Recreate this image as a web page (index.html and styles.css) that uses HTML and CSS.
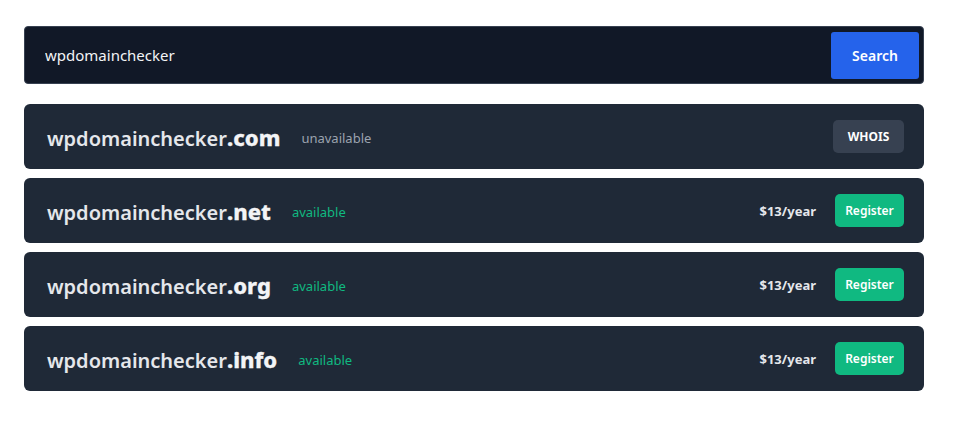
FILE: index.html
```html
<!DOCTYPE html>
<html lang="en">
<head>
<meta charset="utf-8">
<title>Domain Checker</title>
<link rel="stylesheet" href="styles.css">
</head>
<body>
<main class="checker">
  <form class="search">
    <input class="search-input" type="text" value="wpdomainchecker">
    <button class="search-btn" type="button">Search</button>
  </form>
  <ul class="results">
    <li class="result">
      <div class="domain">
        <span class="name">wpdomainchecker<b class="tld">.com</b></span>
        <span class="status taken">unavailable</span>
      </div>
      <div class="actions">
        <button class="btn whois" type="button">WHOIS</button>
      </div>
    </li>
    <li class="result">
      <div class="domain">
        <span class="name">wpdomainchecker<b class="tld">.net</b></span>
        <span class="status free">available</span>
      </div>
      <div class="actions">
        <span class="price">$13/year</span>
        <button class="btn register" type="button">Register</button>
      </div>
    </li>
    <li class="result">
      <div class="domain">
        <span class="name">wpdomainchecker<b class="tld">.org</b></span>
        <span class="status free">available</span>
      </div>
      <div class="actions">
        <span class="price">$13/year</span>
        <button class="btn register" type="button">Register</button>
      </div>
    </li>
    <li class="result">
      <div class="domain">
        <span class="name">wpdomainchecker<b class="tld">.info</b></span>
        <span class="status free">available</span>
      </div>
      <div class="actions">
        <span class="price">$13/year</span>
        <button class="btn register" type="button">Register</button>
      </div>
    </li>
  </ul>
</main>
</body>
</html>
```
FILE: styles.css
```css
* { box-sizing: border-box; }

body {
  margin: 0;
  background: #ffffff;
  font-family: "Noto Sans", "Open Sans", sans-serif;
}

.checker {
  width: 900px;
  margin: 26px 0 0 24px;
  display: flex;
  flex-direction: column;
  gap: 20px;
}

.search {
  display: flex;
  align-items: center;
  height: 58px;
  padding: 4px;
  background: #111827;
  border: 1px solid #374151;
  border-radius: 4px;
}

.search-input {
  flex: 1;
  height: 100%;
  padding: 0 0 0 16px;
  border: 0;
  outline: 0;
  background: transparent;
  color: #f3f4f6;
  font: 15px "Noto Sans", "Open Sans", sans-serif;
}

.search-btn {
  width: 88px;
  height: 47px;
  border: 0;
  border-radius: 3px;
  background: #2563eb;
  color: #ffffff;
  font: 600 14px "Noto Sans", "Open Sans", sans-serif;
}

.results {
  list-style: none;
  margin: 0;
  padding: 0;
  display: flex;
  flex-direction: column;
  gap: 9px;
}

.result {
  display: flex;
  align-items: center;
  justify-content: space-between;
  height: 65px;
  padding: 0 20px 0 23px;
  background: #1f2937;
  border-radius: 6px;
}

.domain {
  display: flex;
  align-items: center;
  gap: 21px;
}

.name {
  color: #e5e7eb;
  font-size: 20px;
  font-weight: 600;
}

.tld {
  font-weight: 800;
  color: #f3f4f6;
  font-size: 22px;
  -webkit-text-stroke: 0.3px #f3f4f6;
}

.status { font-size: 13px; padding-top: 2px; }
.status.taken { color: #9ca3af; }
.status.free { color: #10b981; }

.actions {
  display: flex;
  align-items: center;
  gap: 19px;
}

.price {
  color: #e5e7eb;
  font-size: 13px;
  font-weight: 700;
}

.btn {
  height: 33px;
  border: 0;
  border-radius: 5px;
  color: #ffffff;
  font: 600 12px "Noto Sans", "Open Sans", sans-serif;
}

.whois { width: 71px; background: #374151; font-weight: 700; }
.register { width: 69px; background: #10b981; }
```
